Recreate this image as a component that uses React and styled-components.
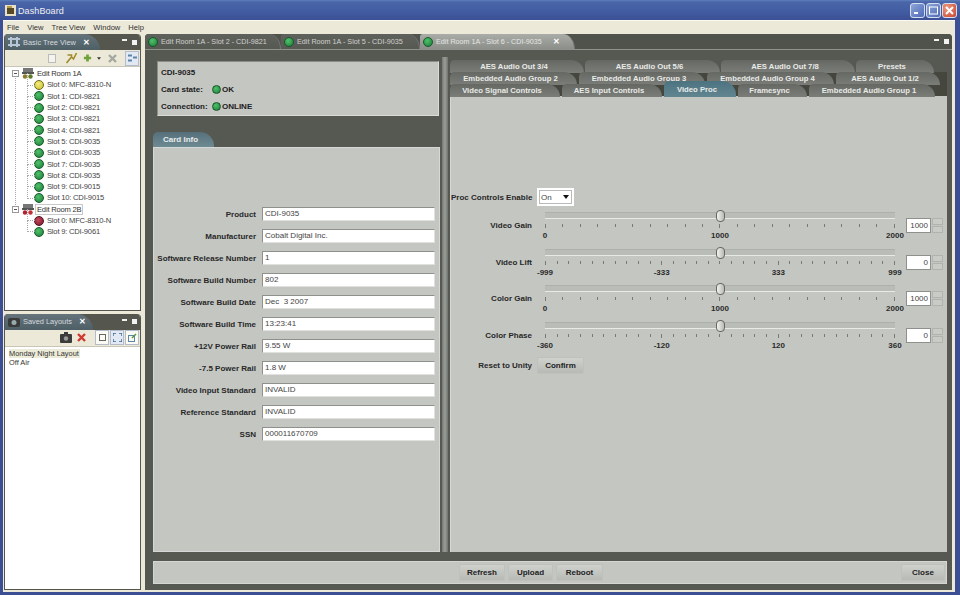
import styled, {createGlobalStyle} from 'styled-components';

const GlobalStyle = createGlobalStyle`
    html, body {
        margin: 0;
        padding: 0;
        background: #3c4f94;
    }
    * {
        box-sizing: border-box;
    }
`;

const Window = styled.div`
    width: 960px;
    height: 595px;
    overflow: hidden;
    display: flex;
    flex-direction: column;
    background: #3c4f94;
    font-family: "Liberation Sans", Arial, sans-serif;
    font-size: 8px;
    color: #202020;
`;

const TitleBar = styled.div`
    height: 20px;
    flex: none;
    display: flex;
    align-items: center;
    gap: 2px;
    padding: 1px 4px 0 5px;
    background: linear-gradient(#5f7fbd 0, #4a66a8 2px, #435ea3 10px, #3c4f94 100%);
    color: #f0f0f0;
    font-size: 9px;
    letter-spacing: 0.1px;
`;

const TitleText = styled.span`
    flex: 1;
`;

const WinButton = styled.div`
    width: 15px;
    height: 15px;
    margin-right: -1px;
    border: 1px solid #d6def0;
    border-radius: 3px;
    background: ${(p) => (p.$close ? 'radial-gradient(circle at 30% 30%, #ee9a80, #c8452e)' : 'linear-gradient(135deg, #8ea6d8, #4d6ab8)')};
    display: flex;
    align-items: center;
    justify-content: center;
`;

const Frame = styled.div`
    flex: 1;
    min-height: 0;
    display: flex;
    flex-direction: column;
    padding: 0 5px 3px 3px;
`;

const MenuBar = styled.div`
    height: 14px;
    flex: none;
    display: flex;
    align-items: center;
    gap: 8px;
    padding: 0 4px;
    background: #ece9d8;
    border-top: 1px solid #fbfaf2;
    font-size: 7.6px;
    color: #333;
`;

const Body = styled.div`
    flex: 1;
    min-height: 0;
    display: flex;
    gap: 4px;
    padding: 0 3px 2px 1px;
    background: #ece9d8;
`;

const Sidebar = styled.div`
    width: 137px;
    flex: none;
    display: flex;
    flex-direction: column;
    gap: 3px;
`;

const Panel = styled.div`
    flex: 1;
    display: flex;
    flex-direction: column;
    border-radius: 4px 4px 0 0;
    background: #fff;
    border: 1px solid #55574f;
    border-top: 0;
    overflow: hidden;
`;

const PanelHeader = styled.div`
    height: 16px;
    flex: none;
    display: flex;
    align-items: stretch;
    justify-content: space-between;
    background: #55574f;
`;

const PanelTab = styled.div`
    width: ${(p) => p.$width}px;
    display: flex;
    align-items: center;
    gap: 2px;
    padding-left: 2px;
    color: #d5dade;
    font-size: 7.4px;
    white-space: nowrap;
    background: linear-gradient(#65737b, #4e5f66);
    border-top-right-radius: 16px 16px;
`;

const CloseMark = styled.span`
    color: #fff;
    font-weight: bold;
    font-size: 8px;
    margin-left: ${(p) => p.$gap || 5}px;
`;

const WindowControls = styled.div`
    display: flex;
    align-items: center;
    gap: 5px;
    padding: 0 3px;
`;

const MinMark = styled.span`
    width: 5px;
    height: 2px;
    background: #f2f2f2;
    margin-bottom: 4px;
`;

const MaxMark = styled.span`
    width: 5px;
    height: 5px;
    background: #f2f2f2;
`;

const Toolbar = styled.div`
    height: 17px;
    flex: none;
    display: flex;
    align-items: center;
    justify-content: flex-end;
    padding: 0 1px;
    background: #ece9d8;
    border-bottom: 1px solid #c8c6b4;
`;

const ToolIcon = styled.svg`
    flex: none;
    margin-left: ${(p) => p.$before || 0}px;
`;

const ToolToggle = styled.div`
    width: 14px;
    height: 15px;
    flex: none;
    margin-left: ${(p) => p.$before || 0}px;
    display: flex;
    align-items: center;
    justify-content: center;
    border: 1px solid #b4bccb;
    background: ${(p) => (p.$on ? '#e3e9f4' : '#fbfbf6')};
`;

const TreeList = styled.ul`
    flex: 1;
    list-style: none;
    margin: 0;
    padding: 1px 0 0 7px;
    font-size: 7.6px;
    letter-spacing: -0.2px;
`;

const RoomGroup = styled.li`
    position: relative;
    &::before {
        content: '';
        display: ${(p) => (p.$connected ? 'block' : 'none')};
        position: absolute;
        left: 3px;
        top: 8px;
        bottom: -3px;
        border-left: 1px dotted #aaa;
    }
`;

const GroupRows = styled.ul`
    list-style: none;
    margin: 0;
    padding: 0;
`;

const RoomRow = styled.li`
    height: 11.3px;
    display: flex;
    align-items: center;
    gap: 2px;
    white-space: nowrap;
`;

const Expander = styled.span`
    width: 7px;
    height: 7px;
    flex: none;
    border: 1px solid #999;
    margin-right: 1px;
    position: relative;
    background: #fff;
    &::after {
        content: '';
        position: absolute;
        left: 1px;
        right: 1px;
        top: 2px;
        height: 1px;
        background: #555;
    }
`;

const RoomName = styled.span`
    padding: 0 1px;
    outline: ${(p) => (p.$selected ? '1px solid #c9c9c9' : 'none')};
    color: #333;
`;

const SlotRow = styled.li`
    height: 11.3px;
    display: flex;
    align-items: center;
    gap: 3px;
    margin-left: 15px;
    padding-left: 7px;
    white-space: nowrap;
    color: #444;
    position: relative;
    &::before {
        content: '';
        position: absolute;
        left: 0;
        top: -6px;
        bottom: 5px;
        width: 7px;
        border-left: 1px dotted #aaa;
        border-bottom: 1px dotted #aaa;
    }
`;

const ledColors = {
    green: ['#4fc26a', '#1d7a38', '#17582a'],
    yellow: ['#f5ee7a', '#c9bd2c', '#6c6a1c'],
    red: ['#c8475c', '#7b1528', '#4e1020'],
};

const Led = styled.span`
    width: ${(p) => p.$size || 10}px;
    height: ${(p) => p.$size || 10}px;
    flex: none;
    border-radius: 50%;
    background: radial-gradient(circle at 40% 35%, ${(p) => ledColors[p.$color][0]}, ${(p) => ledColors[p.$color][1]});
    border: 1px solid ${(p) => ledColors[p.$color][2]};
`;

const LayoutList = styled.ul`
    flex: 1;
    list-style: none;
    margin: 0;
    padding: 2px 4px;
    font-size: 7.4px;
`;

const LayoutItem = styled.li`
    height: 9.5px;
    line-height: 9.5px;
    width: fit-content;
    padding-right: 1px;
    color: #333;
    background: ${(p) => (p.$selected ? '#ecebd8' : 'transparent')};
`;

const Main = styled.div`
    flex: 1;
    min-width: 0;
    display: flex;
    flex-direction: column;
    border-radius: 4px 4px 0 0;
    background: #565852;
    overflow: hidden;
`;

const EditorTabs = styled.div`
    height: 16px;
    flex: none;
    display: flex;
    align-items: stretch;
    justify-content: space-between;
    background: #50524c;
    border-bottom: 1px solid #8f918c;
`;

const EditorTabList = styled.div`
    display: flex;
    align-items: stretch;
`;

const EditorTab = styled.div`
    width: ${(p) => p.$width}px;
    display: flex;
    align-items: center;
    gap: 3px;
    padding-left: 3px;
    font-size: 7.2px;
    white-space: nowrap;
    color: ${(p) => (p.$active ? '#e4e6e3' : '#cfd1cd')};
    background: ${(p) => (p.$active ? 'linear-gradient(#a9aca7, #8b8e89)' : 'linear-gradient(#5f615c, #565852)')};
    border-top-right-radius: 12px 15px;
    border-top-left-radius: 3px;
    border-right: 1px solid #777;
`;

const EditorArea = styled.div`
    flex: 1;
    min-height: 0;
    display: flex;
    flex-direction: column;
    gap: 9px;
    padding: 11px 5px 6px 8px;
`;

const Split = styled.div`
    flex: 1;
    min-height: 0;
    display: flex;
`;

const LeftPane = styled.div`
    width: 287px;
    flex: none;
    display: flex;
    flex-direction: column;
`;

const StatusBox = styled.div`
    height: 55px;
    flex: none;
    display: grid;
    grid-template-columns: 51px 1fr;
    grid-auto-rows: 17px;
    align-items: center;
    padding: 2px 0 0 3px;
    margin: 0 1px 16px 4px;
    background: #c4c6c2;
    border: 1px solid #d9dbd7;
    border-top-color: #8b8d89;
    border-left-color: #8b8d89;
    font-weight: bold;
`;

const StatusTitle = styled.div`
    grid-column: 1 / 3;
`;

const StatusValue = styled.div`
    display: flex;
    align-items: center;
    gap: 1px;
`;

const CardTab = styled.div`
    width: 61px;
    height: 15px;
    flex: none;
    display: flex;
    align-items: center;
    padding-left: 10px;
    color: #e8ecec;
    font-weight: bold;
    background: linear-gradient(#56707b, #6d8a92);
    border-radius: 5px 14px 0 0;
`;

const CardPanel = styled.div`
    flex: 1;
    display: grid;
    grid-template-columns: 102px 173px;
    grid-auto-rows: 22px;
    column-gap: 6px;
    align-items: center;
    align-content: start;
    padding-top: 55px;
    background: #c4c6c2;
    border: 1px solid #d4d8d6;
`;

const FieldLabel = styled.label`
    text-align: right;
    font-weight: bold;
    color: #282828;
    white-space: nowrap;
`;

const FieldValue = styled.div`
    height: 14px;
    line-height: 12px;
    padding-left: 2px;
    background: #fff;
    border: 1px solid #8e908c;
    border-right-color: #e0e0de;
    border-bottom-color: #e0e0de;
    color: #444;
    white-space: pre;
`;

const Splitter = styled.div`
    width: 6px;
    flex: none;
    margin: -4px 2px 0 2px;
    background: linear-gradient(90deg, #777a75, #9b9d99 50%, #6f716c);
`;

const RightPane = styled.div`
    flex: 1;
    min-width: 0;
    display: flex;
    flex-direction: column;
    margin-top: -1px;
`;

const TabRows = styled.div`
    flex: none;
    display: flex;
    flex-direction: column;
`;

const TabRow = styled.div`
    height: 12px;
    display: flex;
    gap: ${(p) => p.$gap}px;
    background: ${(p) => (p.$backed ? '#45473f' : 'transparent')};
`;

const ProcTab = styled.div`
    width: ${(p) => p.$width}px;
    height: ${(p) => (p.$active ? 16 : 13)}px;
    margin-top: ${(p) => (p.$active ? -3 : 0)}px;
    flex: none;
    display: flex;
    align-items: center;
    justify-content: center;
    padding-right: 6px;
    font-size: 7.7px;
    font-weight: bold;
    white-space: nowrap;
    color: #e9ebe8;
    background: ${(p) => (p.$active ? 'linear-gradient(#4d7381, #628690)' : 'linear-gradient(#666863, #7b7d78)')};
    border-radius: 5px 14px 0 0;
    position: relative;
`;

const ProcPanel = styled.div`
    flex: 1;
    display: flex;
    flex-direction: column;
    padding-top: 92px;
    background: #c4c6c2;
    border-left: 1px solid #d4d8d6;
`;

const EnableRow = styled.div`
    display: grid;
    grid-template-columns: 81px auto;
    column-gap: 5px;
    justify-content: start;
    align-items: center;
    height: 18px;
    margin-bottom: 6px;
`;

const ControlLabel = styled.div`
    text-align: right;
    font-weight: bold;
    color: #282828;
    white-space: nowrap;
`;

const SliderName = styled(ControlLabel)`
    margin-top: 9px;
`;

const Select = styled.div`
    width: 37px;
    height: 18px;
    display: flex;
    align-items: center;
    justify-content: space-between;
    padding: 0 5px 0 4px;
    background: #fff;
    box-shadow: inset 0 0 0 2px #fff, inset 0 0 0 3px #bbb;
    color: #444;
    &::after {
        content: '';
        border: 3.5px solid transparent;
        border-top: 4px solid #111;
        border-bottom: 0;
    }
`;

const SliderRow = styled.div`
    height: 36.5px;
    display: grid;
    grid-template-columns: 81px 374px 26px 12px;
    align-items: start;
`;

const SliderBox = styled.div`
    height: 36px;
    margin: 0 11px 0 13px;
    display: flex;
    flex-direction: column;
`;

const Track = styled.div`
    height: 7px;
    flex: none;
    background: #babcb8;
    border-bottom: 1px solid #e8eae6;
    border-top: 1px solid #aeb0ac;
    position: relative;
`;

const Thumb = styled.div`
    position: absolute;
    left: 50%;
    top: -3px;
    width: 9px;
    height: 12px;
    margin-left: -4.5px;
    border-radius: 4px;
    background: linear-gradient(90deg, #f2f2ee, #b8bab6);
    border: 1px solid #666;
`;

const Ticks = styled.div`
    height: 4px;
    margin-top: 5px;
    display: flex;
    justify-content: space-between;
    align-items: flex-start;
`;

const Tick = styled.span`
    width: 1px;
    height: ${(p) => (p.$major ? 4 : 3)}px;
    background: #777a76;
`;

const ScaleLabels = styled.div`
    display: flex;
    justify-content: space-between;
    margin-top: 3px;
`;

const ScaleLabel = styled.span`
    width: 0;
    display: flex;
    justify-content: center;
    font-weight: bold;
    white-space: nowrap;
    color: #2a2a2a;
`;

const SpinInput = styled.div`
    width: 25px;
    height: 15px;
    margin-top: 6px;
    line-height: 13px;
    text-align: right;
    padding-right: 2px;
    background: #fff;
    border: 1px solid #8e908c;
    color: #444;
`;

const SpinButtons = styled.div`
    width: 11px;
    height: 15px;
    margin-top: 6px;
    display: flex;
    flex-direction: column;
    gap: 1px;
`;

const SpinButton = styled.span`
    flex: 1;
    background: #c9cbc7;
    border: 1px solid #b1b3af;
`;

const ResetRow = styled.div`
    display: grid;
    grid-template-columns: 81px auto;
    column-gap: 5px;
    justify-content: start;
    align-items: center;
    margin-top: -1px;
`;

const ActionButton = styled.button`
    width: ${(p) => p.$width}px;
    height: 17px;
    padding: 0;
    font-family: inherit;
    font-size: 8px;
    font-weight: bold;
    color: #222;
    background: linear-gradient(#cfd1cd, #b8bab6);
    border: 1px solid #bfc1bd;
    border-radius: 2px;
`;

const BottomBar = styled.div`
    height: 23px;
    flex: none;
    display: flex;
    align-items: center;
    justify-content: space-between;
    padding: 0 1px 0 305px;
    background: #c4c6c2;
    border: 1px solid #d4d6d2;
`;

const ButtonGroup = styled.div`
    display: flex;
    gap: 3px;
`;

const RoomIcon = ({alert}) => (
    <svg width="12" height="11" viewBox="0 0 12 11">
        <rect x="1" y="0" width="10" height="4" fill="#777" />
        <rect x="0" y="4" width="12" height="2" fill="#555" />
        <circle cx="3" cy="8.5" r="2.2" fill={alert ? '#b3202f' : '#8c7a2a'} />
        <circle cx="8.5" cy="8.5" r="2.2" fill={alert ? '#c03038' : '#5f7a2a'} />
    </svg>
);

const tree = [
    {
        name: 'Edit Room 1A',
        slots: [
            ['Slot 0: MFC-8310-N', 'yellow'],
            ['Slot 1: CDI-9821', 'green'],
            ['Slot 2: CDI-9821', 'green'],
            ['Slot 3: CDI-9821', 'green'],
            ['Slot 4: CDI-9821', 'green'],
            ['Slot 5: CDI-9035', 'green'],
            ['Slot 6: CDI-9035', 'green'],
            ['Slot 7: CDI-9035', 'green'],
            ['Slot 8: CDI-9035', 'green'],
            ['Slot 9: CDI-9015', 'green'],
            ['Slot 10: CDI-9015', 'green'],
        ],
    },
    {
        name: 'Edit Room 2B',
        selected: true,
        alert: true,
        slots: [
            ['Slot 0: MFC-8310-N', 'red'],
            ['Slot 9: CDI-9061', 'green'],
        ],
    },
];

const fields = [
    ['Product', 'CDI-9035'],
    ['Manufacturer', 'Cobalt Digital Inc.'],
    ['Software Release Number', '1'],
    ['Software Build Number', '802'],
    ['Software Build Date', 'Dec  3 2007'],
    ['Software Build Time', '13:23:41'],
    ['+12V Power Rail', '9.55 W'],
    ['-7.5 Power Rail', '1.8 W'],
    ['Video Input Standard', 'INVALID'],
    ['Reference Standard', 'INVALID'],
    ['SSN', '000011670709'],
];

const tabRows = [
    {gap: 1, tabs: [['AES Audio Out 3/4', 134], ['AES Audio Out 5/6', 135], ['AES Audio Out 7/8', 134], ['Presets', 78]]},
    {gap: 2, backed: true, tabs: [['Embedded Audio Group 2', 127], ['Embedded Audio Group 3', 126], ['Embedded Audio Group 4', 127], ['AES Audio Out 1/2', 104]]},
    {gap: 2, backed: true, tabs: [['Video Signal Controls', 110], ['AES Input Controls', 100], ['Video Proc', 72, true], ['Framesync', 69], ['Embedded Audio Group 1', 126]]},
];

const sliders = [
    {name: 'Video Gain', ticks: 21, labels: ['0', '1000', '2000'], value: '1000'},
    {name: 'Video Lift', ticks: 31, labels: ['-999', '-333', '333', '999'], value: '0'},
    {name: 'Color Gain', ticks: 21, labels: ['0', '1000', '2000'], value: '1000'},
    {name: 'Color Phase', ticks: 31, labels: ['-360', '-120', '120', '360'], value: '0'},
];

const Slider = ({ticks, labels}) => (
    <SliderBox>
        <Track>
            <Thumb />
        </Track>
        <Ticks>
            {Array.from({length: ticks}, (_, i) => (
                <Tick key={i} $major={i % ((ticks - 1) / (labels.length - 1)) === 0} />
            ))}
        </Ticks>
        <ScaleLabels>
            {labels.map((label) => (
                <ScaleLabel key={label}>{label}</ScaleLabel>
            ))}
        </ScaleLabels>
    </SliderBox>
);

export default function App() {
    return (
        <Window>
            <GlobalStyle />
            <TitleBar>
                <svg width="11" height="11" viewBox="0 0 11 11">
                    <rect width="11" height="11" fill="#e6e1c8" />
                    <rect x="2" y="3" width="7" height="6" fill="#5a4a24" />
                    <rect x="2" y="1" width="5" height="2" fill="#b59a4a" />
                </svg>
                <TitleText>DashBoard</TitleText>
                <WinButton>
                    <svg width="7" height="7" viewBox="0 0 7 7"><rect x="0" y="5" width="4" height="2" fill="#fff" /></svg>
                </WinButton>
                <WinButton>
                    <svg width="9" height="9" viewBox="0 0 9 9"><rect x="0.5" y="1" width="8" height="7" fill="none" stroke="#fff" /></svg>
                </WinButton>
                <WinButton $close>
                    <svg width="9" height="9" viewBox="0 0 9 9"><path d="M1 1 8 8M8 1 1 8" stroke="#fff" strokeWidth="2" /></svg>
                </WinButton>
            </TitleBar>
            <Frame>
                <MenuBar>
                    {['File', 'View', 'Tree View', 'Window', 'Help'].map((item) => (
                        <span key={item}>{item}</span>
                    ))}
                </MenuBar>
                <Body>
                    <Sidebar>
                        <Panel>
                            <PanelHeader>
                                <PanelTab $width={95}>
                                    <svg width="14" height="12" viewBox="0 0 14 12">
                                        <path d="M1 3h12M1 9h12M4 1v10M10 1v10" stroke="#b7c6d6" strokeWidth="2" />
                                    </svg>
                                    Basic Tree View
                                    <CloseMark>✕</CloseMark>
                                </PanelTab>
                                <WindowControls>
                                    <MinMark />
                                    <MaxMark />
                                </WindowControls>
                            </PanelHeader>
                            <Toolbar>
                                <ToolIcon width="10" height="10" viewBox="0 0 10 10"><rect x="1.5" y="1.5" width="7" height="8" fill="#f5f4ec" stroke="#bbb" /></ToolIcon>
                                <ToolIcon $before={8} width="13" height="12" viewBox="0 0 12 12"><path d="M1 11 6 5l2 2 3-6M2 3h4v3" stroke="#a08a2a" strokeWidth="1.6" fill="none" /></ToolIcon>
                                <ToolIcon $before={5} width="9" height="10" viewBox="0 0 10 10"><path d="M5 1v8M1 5h8" stroke="#6ea33a" strokeWidth="3" /></ToolIcon>
                                <ToolIcon $before={5} width="4" height="3" viewBox="0 0 5 3"><path d="M0 0h5L2.5 3z" fill="#333" /></ToolIcon>
                                <ToolIcon $before={7} width="9" height="9" viewBox="0 0 9 9"><path d="M1 1 8 8M8 1 1 8" stroke="#a4a8a0" strokeWidth="2.4" /></ToolIcon>
                                <ToolToggle $before={8} $on>
                                    <svg width="9" height="10" viewBox="0 0 9 9"><path d="M0 1h4v2H0zM5 3h4v2H5zM0 6h4v2H0z" fill="#5c86a8" /></svg>
                                </ToolToggle>
                            </Toolbar>
                            <TreeList>
                                {tree.map((room, index) => (
                                    <RoomGroup key={room.name} $connected={index === 0}>
                                        <GroupRows>
                                            <RoomRow>
                                                <Expander />
                                                <RoomIcon alert={room.alert} />
                                                <RoomName $selected={room.selected}>{room.name}</RoomName>
                                            </RoomRow>
                                            {room.slots.map(([label, color]) => (
                                                <SlotRow key={label}>
                                                    <Led $color={color} />
                                                    {label}
                                                </SlotRow>
                                            ))}
                                        </GroupRows>
                                    </RoomGroup>
                                ))}
                            </TreeList>
                        </Panel>
                        <Panel>
                            <PanelHeader>
                                <PanelTab $width={88}>
                                    <svg width="14" height="13" viewBox="0 0 14 13">
                                        <rect x="1" y="3" width="12" height="9" rx="2" fill="#3a3a3a" />
                                        <circle cx="7" cy="7.5" r="2.5" fill="#9aa" />
                                    </svg>
                                    Saved Layouts
                                    <CloseMark>✕</CloseMark>
                                </PanelTab>
                                <WindowControls>
                                    <MinMark />
                                    <MaxMark />
                                </WindowControls>
                            </PanelHeader>
                            <Toolbar>
                                <ToolIcon width="12" height="11" viewBox="0 0 12 11"><rect x="0" y="2" width="12" height="9" rx="1" fill="#3c3c3c" /><rect x="4" y="0" width="4" height="3" fill="#3c3c3c" /><circle cx="6" cy="6.5" r="2.2" fill="#999" /></ToolIcon>
                                <ToolIcon $before={5} width="9" height="9" viewBox="0 0 9 9"><path d="M1 1 8 8M8 1 1 8" stroke="#d03a30" strokeWidth="2.4" /></ToolIcon>
                                <ToolToggle $before={9}>
                                    <svg width="7" height="7" viewBox="0 0 7 7"><rect x="0.5" y="0.5" width="6" height="6" fill="none" stroke="#666" /></svg>
                                </ToolToggle>
                                <ToolToggle $before={1} $on>
                                    <svg width="9" height="9" viewBox="0 0 9 9"><path d="M0 3V0h3M6 0h3v3M9 6v3H6M3 9H0V6" fill="none" stroke="#3d6a8c" strokeWidth="1.4" /></svg>
                                </ToolToggle>
                                <ToolToggle $before={1}>
                                    <svg width="9" height="9" viewBox="0 0 9 9"><rect x="0.5" y="2.5" width="6" height="6" fill="none" stroke="#5c86a8" /><path d="M4 5 8 1" stroke="#4e9a3c" strokeWidth="1.5" /></svg>
                                </ToolToggle>
                            </Toolbar>
                            <LayoutList>
                                <LayoutItem $selected>Monday Night Layout</LayoutItem>
                                <LayoutItem>Off Air</LayoutItem>
                            </LayoutList>
                        </Panel>
                    </Sidebar>
                    <Main>
                        <EditorTabs>
                            <EditorTabList>
                                <EditorTab $width={136}>
                                    <Led $color="green" />
                                    Edit Room 1A - Slot 2 - CDI-9821
                                </EditorTab>
                                <EditorTab $width={139}>
                                    <Led $color="green" />
                                    Edit Room 1A - Slot 5 - CDI-9035
                                </EditorTab>
                                <EditorTab $width={155} $active>
                                    <Led $color="green" />
                                    Edit Room 1A - Slot 6 - CDI-9035
                                    <CloseMark $gap={8}>✕</CloseMark>
                                </EditorTab>
                            </EditorTabList>
                            <WindowControls>
                                <MinMark />
                                <MaxMark />
                            </WindowControls>
                        </EditorTabs>
                        <EditorArea>
                            <Split>
                                <LeftPane>
                                    <StatusBox>
                                        <StatusTitle>CDI-9035</StatusTitle>
                                        <div>Card state:</div>
                                        <StatusValue><Led $color="green" $size={9} />OK</StatusValue>
                                        <div>Connection:</div>
                                        <StatusValue><Led $color="green" $size={9} />ONLINE</StatusValue>
                                    </StatusBox>
                                    <CardTab>Card Info</CardTab>
                                    <CardPanel>
                                        {fields.map(([label, value]) => [
                                            <FieldLabel key={label}>{label}</FieldLabel>,
                                            <FieldValue key={label + '-value'}>{value}</FieldValue>,
                                        ])}
                                    </CardPanel>
                                </LeftPane>
                                <Splitter />
                                <RightPane>
                                    <TabRows>
                                        {tabRows.map((row) => (
                                            <TabRow key={row.tabs[0][0]} $gap={row.gap} $backed={row.backed}>
                                                {row.tabs.map(([label, width, active]) => (
                                                    <ProcTab key={label} $width={width} $active={active}>{label}</ProcTab>
                                                ))}
                                            </TabRow>
                                        ))}
                                    </TabRows>
                                    <ProcPanel>
                                        <EnableRow>
                                            <ControlLabel>Proc Controls Enable</ControlLabel>
                                            <Select>On</Select>
                                        </EnableRow>
                                        {sliders.map((slider) => (
                                            <SliderRow key={slider.name}>
                                                <SliderName>{slider.name}</SliderName>
                                                <Slider ticks={slider.ticks} labels={slider.labels} />
                                                <SpinInput>{slider.value}</SpinInput>
                                                <SpinButtons>
                                                    <SpinButton />
                                                    <SpinButton />
                                                </SpinButtons>
                                            </SliderRow>
                                        ))}
                                        <ResetRow>
                                            <ControlLabel>Reset to Unity</ControlLabel>
                                            <ActionButton $width={47}>Confirm</ActionButton>
                                        </ResetRow>
                                    </ProcPanel>
                                </RightPane>
                            </Split>
                            <BottomBar>
                                <ButtonGroup>
                                    <ActionButton $width={46}>Refresh</ActionButton>
                                    <ActionButton $width={45}>Upload</ActionButton>
                                    <ActionButton $width={47}>Reboot</ActionButton>
                                </ButtonGroup>
                                <ActionButton $width={44}>Close</ActionButton>
                            </BottomBar>
                        </EditorArea>
                    </Main>
                </Body>
            </Frame>
        </Window>
    );
}
